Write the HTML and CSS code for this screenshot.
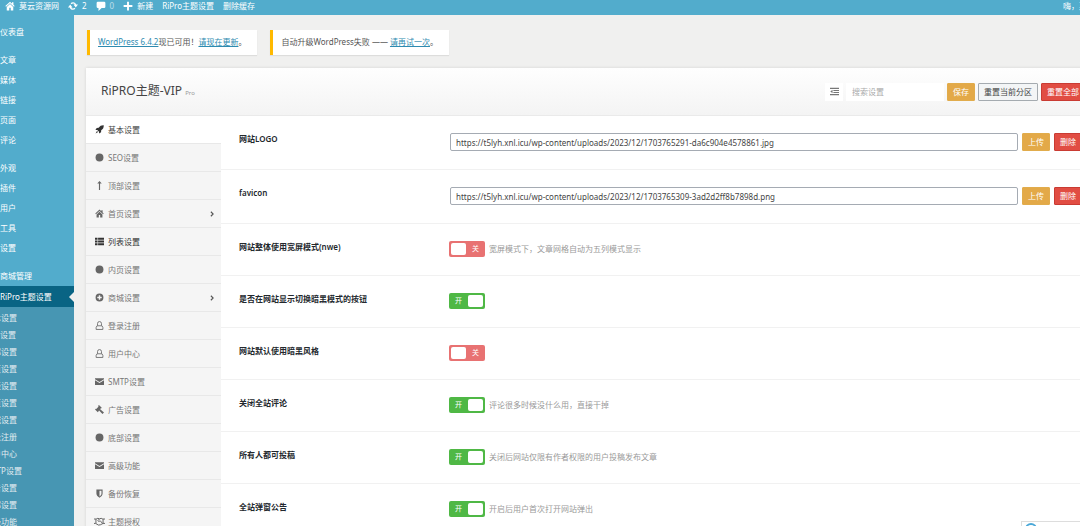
FILE: index.html
```html
<!DOCTYPE html>
<html lang="zh-CN">
<head>
<meta charset="utf-8">
<title>RiPRO主题设置</title>
<link rel="stylesheet" href="styles.css">
</head>
<body>
<svg class="sprite" aria-hidden="true">
  <symbol id="i-home" viewBox="0 0 16 16"><path d="M8 1 0.5 8l1.200 1.300L8 3.600l6.300 5.700L15.500 8 13.500 6.100V2h-2.300v2zM8 4.900 2.800 9.600V15h4v-4.200h2.400V15h4V9.600z"/></symbol>
  <symbol id="i-update" viewBox="0 0 20 20"><path d="M10.200 2.300c3 0 5.500 2 6.300 4.900H20l-4.500 5.600L11 7.200h2.700c-.7-1.300-2-2.100-3.500-2.100-1.200 0-2.300.5-3 1.300L5.200 4.300c1.300-1.300 3-2 5-2zM4.500 7.200 9 12.800H6.300c.7 1.300 2 2.100 3.500 2.100 1.200 0 2.300-.5 3-1.300l2 2.100c-1.300 1.300-3 2-5 2-3 0-5.500-2-6.300-4.900H0z"/></symbol>
  <symbol id="i-comment" viewBox="0 0 16 16"><path d="M3 1h10a2 2 0 0 1 2 2v6a2 2 0 0 1-2 2H9l-5 5v-5H3a2 2 0 0 1-2-2V3a2 2 0 0 1 2-2z"/></symbol>
  <symbol id="i-plus" viewBox="0 0 16 16"><path d="M6.500 1h3v5.500H15v3H9.500V15h-3V9.500H1v-3h5.500z"/></symbol>
  <symbol id="i-rocket" viewBox="0 0 16 16"><path d="M15.500.5c-4-.2-6.700 1-9 4.500L3 5.200.8 8.700l3.200.2 3.100 3.100.2 3.200 3.500-2.200.2-3.500c3.500-2.300 4.700-5 4.500-9zM3.500 10.500 1 15l4.500-2.500z"/></symbol>
  <symbol id="i-circle" viewBox="0 0 16 16"><circle cx="8" cy="8" r="7"/></symbol>
  <symbol id="i-up" viewBox="0 0 16 16"><path d="m8 0 4 4.500H9V16H7V4.500H4z"/></symbol>
  <symbol id="i-list" viewBox="0 0 16 16"><path d="M0 1.500h4.500V5H0zM5.500 1.500H16V5H5.500zM0 6.200h4.500v3.500H0zM5.500 6.200H16v3.500H5.500zM0 11h4.500v3.500H0zM5.500 11H16v3.500H5.500z"/></symbol>
  <symbol id="i-plus-circle" viewBox="0 0 16 16"><path fill-rule="evenodd" d="M8 1a7 7 0 1 1 0 14A7 7 0 0 1 8 1zM6.700 4v2.700H4v2.600h2.700V12h2.600V9.300H12V6.700H9.300V4z"/></symbol>
  <symbol id="i-lock" viewBox="0 0 16 16"><path fill="none" stroke="currentColor" stroke-width="1.500" d="M4.500 8V4.500a3.500 3.500 0 0 1 7 0V8M3.500 8.500h9l1.500 3v3.500H2v-3.500z"/></symbol>
  <symbol id="i-mail" viewBox="0 0 16 16"><path d="M0 2h16v2L8 9 0 4zM0 5.800l8 5 8-5V14H0z"/></symbol>
  <symbol id="i-gavel" viewBox="0 0 16 16"><path d="M7 0l5 5-1.300 1.300-.7-.3-1.200 1.200L16 13.200 13.200 16 7.300 9.700 6 11l.3.700L5 13 0 8l1.300-1.300.9.200L6.100 3l-.4-1.700z"/></symbol>
  <symbol id="i-shield" viewBox="0 0 16 16"><path fill-rule="evenodd" d="M2.500 1h11v7c0 3.500-2.500 5.500-5.500 7.500C5 13.500 2.500 11.500 2.500 8zM8 3v10.200c2-1.500 3.500-2.900 3.500-5.200V3z"/></symbol>
  <symbol id="i-hands" viewBox="0 0 20 16"><path fill="none" stroke="currentColor" stroke-width="1.800" d="M0 3.500h4l3-1.300 3 1 3-1 3 1.300h4M0 11.500h3l5 3 3.500-.5 3-1.500 2-1H20M3.500 3.500v8M16.500 3.500v8M10 3.200 7 6.500c1 2 3 1.500 4.200 0l4.300 5"/></symbol>
  <symbol id="i-indent" viewBox="0 0 16 16"><path d="M0 1.500h16v2H0zM6 5.200h10v2H6zM6 8.800h10v2H6zM0 12.500h16v2H0zM4.500 4.700v6.600L.5 8z"/></symbol>
  <symbol id="i-next" viewBox="0 0 16 16"><path fill="none" stroke="currentColor" stroke-width="3" d="m5 2 6 6-6 6"/></symbol>
</svg>

<header class="adminbar">
  <a href="#" class="bar-home"><svg class="icon"><use href="#i-home"/></svg>莫云资源网</a>
  <a href="#"><svg class="icon"><use href="#i-update"/></svg>2</a>
  <a href="#" class="bar-faint"><svg class="icon"><use href="#i-comment"/></svg><span>0</span></a>
  <a href="#"><svg class="icon"><use href="#i-plus"/></svg>新建</a>
  <a href="#">RiPro主题设置</a>
  <a href="#">删除缓存</a>
  <a href="#" class="bar-user">嗨，莫云</a>
</header>

<div class="layout">
  <nav class="adminmenu">
    <ul class="menu">
      <li><a href="#">仪表盘</a></li>
      <li class="apart"><a href="#">文章</a></li>
      <li><a href="#">媒体</a></li>
      <li><a href="#">链接</a></li>
      <li><a href="#">页面</a></li>
      <li><a href="#">评论</a></li>
      <li class="apart"><a href="#">外观</a></li>
      <li><a href="#">插件</a></li>
      <li><a href="#">用户</a></li>
      <li><a href="#">工具</a></li>
      <li><a href="#">设置</a></li>
      <li class="apart"><a href="#">商城管理</a></li>
      <li class="current"><a href="#">RiPro主题设置</a></li>
    </ul>
    <ul class="submenu">
      <li><a href="#">基本设置</a></li>
      <li><a href="#">SEO设置</a></li>
      <li><a href="#">顶部设置</a></li>
      <li><a href="#">首页设置</a></li>
      <li><a href="#">列表设置</a></li>
      <li><a href="#">内页设置</a></li>
      <li><a href="#">商城设置</a></li>
      <li><a href="#">登录注册</a></li>
      <li><a href="#">用户中心</a></li>
      <li><a href="#">SMTP设置</a></li>
      <li><a href="#">广告设置</a></li>
      <li><a href="#">底部设置</a></li>
      <li><a href="#">高级功能</a></li>
    </ul>
  </nav>

  <main class="content">
    <div class="notices">
      <p class="notice"><a href="#">WordPress 6.4.2</a>现已可用！<a href="#">请现在更新</a>。</p>
      <p class="notice">自动升级WordPress失败 —— <a href="#">请再试一次</a>。</p>
    </div>

    <form class="panel">
      <div class="panel-head">
        <h1>RiPRO主题-VIP <small>Pro</small></h1>
        <button type="button" class="expand" aria-label="展开全部"><svg class="icon"><use href="#i-indent"/></svg></button>
        <input type="text" class="search" placeholder="搜索设置" aria-label="搜索设置">
        <button type="button" class="btn btn-save">保存</button>
        <button type="button" class="btn btn-plain">重置当前分区</button>
        <button type="button" class="btn btn-danger">重置全部</button>
      </div>

      <div class="panel-body">
        <ul class="tabs">
          <li class="active"><a href="#"><svg class="icon"><use href="#i-rocket"/></svg>基本设置</a></li>
          <li><a href="#"><svg class="icon"><use href="#i-circle"/></svg>SEO设置</a></li>
          <li><a href="#"><svg class="icon"><use href="#i-up"/></svg>顶部设置</a></li>
          <li><a href="#"><svg class="icon"><use href="#i-home"/></svg>首页设置<svg class="arrow"><use href="#i-next"/></svg></a></li>
          <li class="hover"><a href="#"><svg class="icon"><use href="#i-list"/></svg>列表设置</a></li>
          <li><a href="#"><svg class="icon"><use href="#i-circle"/></svg>内页设置</a></li>
          <li><a href="#"><svg class="icon"><use href="#i-plus-circle"/></svg>商城设置<svg class="arrow"><use href="#i-next"/></svg></a></li>
          <li><a href="#"><svg class="icon"><use href="#i-lock"/></svg>登录注册</a></li>
          <li><a href="#"><svg class="icon"><use href="#i-lock"/></svg>用户中心</a></li>
          <li><a href="#"><svg class="icon"><use href="#i-mail"/></svg>SMTP设置</a></li>
          <li><a href="#"><svg class="icon"><use href="#i-gavel"/></svg>广告设置</a></li>
          <li><a href="#"><svg class="icon"><use href="#i-circle"/></svg>底部设置</a></li>
          <li><a href="#"><svg class="icon"><use href="#i-mail"/></svg>高级功能</a></li>
          <li><a href="#"><svg class="icon"><use href="#i-shield"/></svg>备份恢复</a></li>
          <li><a href="#"><svg class="icon icon-wide"><use href="#i-hands"/></svg>主题授权</a></li>
        </ul>

        <div class="fields">
          <div class="field">
            <label class="title" for="logo">网站LOGO</label>
            <div class="control">
              <input type="text" class="url" id="logo" value="https://t5lyh.xnl.icu/wp-content/uploads/2023/12/1703765291-da6c904e4578861.jpg">
              <button type="button" class="btn btn-save">上传</button>
              <button type="button" class="btn btn-danger">删除</button>
            </div>
          </div>
          <div class="field">
            <label class="title" for="favicon">favicon</label>
            <div class="control">
              <input type="text" class="url" id="favicon" value="https://t5lyh.xnl.icu/wp-content/uploads/2023/12/1703765309-3ad2d2ff8b7898d.png">
              <button type="button" class="btn btn-save">上传</button>
              <button type="button" class="btn btn-danger">删除</button>
            </div>
          </div>
          <div class="field">
            <label class="title" for="wide">网站整体使用宽屏模式(nwe)</label>
            <div class="control">
              <label class="switch"><input type="checkbox" id="wide"><span>关</span></label>
              <span class="hint">宽屏模式下，文章网格自动为五列模式显示</span>
            </div>
          </div>
          <div class="field">
            <label class="title" for="toggle">是否在网站显示切换暗黑模式的按钮</label>
            <div class="control">
              <label class="switch"><input type="checkbox" id="toggle" checked><span>开</span></label>
            </div>
          </div>
          <div class="field">
            <label class="title" for="dark">网站默认使用暗黑风格</label>
            <div class="control">
              <label class="switch"><input type="checkbox" id="dark"><span>关</span></label>
            </div>
          </div>
          <div class="field">
            <label class="title" for="comments">关闭全站评论</label>
            <div class="control">
              <label class="switch"><input type="checkbox" id="comments" checked><span>开</span></label>
              <span class="hint">评论很多时候没什么用，直接干掉</span>
            </div>
          </div>
          <div class="field">
            <label class="title" for="submit">所有人都可投稿</label>
            <div class="control">
              <label class="switch"><input type="checkbox" id="submit" checked><span>开</span></label>
              <span class="hint">关闭后网站仅限有作者权限的用户投稿发布文章</span>
            </div>
          </div>
          <div class="field">
            <label class="title" for="popup">全站弹窗公告</label>
            <div class="control">
              <label class="switch"><input type="checkbox" id="popup" checked><span>开</span></label>
              <span class="hint">开启后用户首次打开网站弹出</span>
            </div>
          </div>
        </div>
      </div>
    </form>
  </main>
</div>

<div class="floating"><span class="ring"></span></div>
</body>
</html>
```

FILE: styles.css
```css
* { box-sizing: border-box; }

html, body { height: 100%; }

body {
  margin: 0;
  display: flex;
  flex-direction: column;
  overflow: hidden;
  background: #f0f0ef;
  color: #555;
  font: 8px/12px "Noto Sans", "Noto Sans CJK SC", sans-serif;
}

ul, p, h1 { margin: 0; padding: 0; }
ul { list-style: none; }
input, button { font: inherit; margin: 0; }
.sprite { display: none; }
.icon { width: 9px; height: 9px; fill: currentColor; flex: none; }

/* Top bar */
.adminbar {
  display: flex;
  flex: none;
  align-items: center;
  gap: 9px;
  height: 15px;
  padding: 0 0 4px 5px;
  background: #52accc;
  white-space: nowrap;
}
.adminbar a {
  display: flex;
  align-items: center;
  gap: 4px;
  color: #fff;
  text-decoration: none;
}
.adminbar .icon { width: 10px; height: 10px; }
.bar-faint span { opacity: .6; }
.adminbar .bar-user { width: 17px; margin-left: auto; }

/* Left menu */
.layout { display: flex; flex: 1; min-height: 0; }
.adminmenu {
  display: flex;
  flex-direction: column;
  flex: none;
  width: 74px;
  overflow: hidden;
  background: #52accc;
  white-space: nowrap;
}
.adminmenu a { color: #fff; text-decoration: none; }
.menu { padding-top: 7px; line-height: 20px; }
.menu .apart { margin-top: 8px; }
.menu .current {
  display: flex;
  justify-content: space-between;
  align-items: center;
  height: 21px;
  background: #096484;
}
.current::after {
  content: "";
  border: 5px solid transparent;
  border-left-width: 0;
  border-right-color: #f0f0ef;
}
.submenu {
  flex: 1;
  padding-top: 2px;
  background: #4796b3;
  line-height: 17px;
}
.submenu li { margin-left: -15px; }
.submenu a { color: #e2ecf1; }

/* Notices */
.content { flex: 1; min-width: 0; padding: 15px 0 0 12px; }
.notices { display: flex; gap: 13px; padding-left: 1px; }
.notice {
  padding: 6px 11px 7px 8px;
  border-left: 3px solid #ffb900;
  background: #fff;
  box-shadow: 0 1px 1px rgba(0, 0, 0, .08);
  white-space: nowrap;
}
.notice a { color: #2e8bb0; }

/* Settings panel, wider than the viewport on the right */
.panel {
  margin: 13px -20px 0 0;
  background: #fff;
  box-shadow: 0 0 3px rgba(0, 0, 0, .12);
}
.panel-head {
  display: flex;
  align-items: center;
  gap: 3px;
  height: 48px;
  padding: 0 15px;
  border-bottom: 1px solid #eaeaea;
  background: linear-gradient(#fefefe, #f4f4f4);
}
h1 {
  margin-right: auto;
  color: #444;
  font-size: 12px;
  font-weight: 400;
  line-height: 16px;
}
h1 small { color: #999; font-size: 6px; }
.expand {
  display: flex;
  align-items: center;
  justify-content: center;
  width: 18px;
  height: 18px;
  padding: 0;
  border: 0;
  background: #fff;
  color: #777;
}
.search {
  width: 98px;
  height: 18px;
  padding: 0 6px;
  border: 0;
  background: #fff;
}
.search::placeholder { color: #aaa; }
.btn {
  flex: none;
  height: 18px;
  padding: 0 5px;
  border: 1px solid;
  border-radius: 1px;
  line-height: 14px;
  white-space: nowrap;
}
.btn-save { border-color: #e1ac4c; background: #e3a948; color: #fff; }
.btn-plain { border-color: #a5abb0; background: #f3f5f6; color: #444; }
.btn-danger { border-color: #c93b33; background: #e14d43; color: #fff; }

.panel-body { display: flex; }
.tabs {
  flex: none;
  width: 135px;
  background: #f5f5f5;
}
.tabs a {
  display: flex;
  align-items: center;
  gap: 4px;
  height: 28px;
  padding: 0 6px 0 9px;
  border-bottom: 1px solid #e8e8e8;
  color: #777;
  text-decoration: none;
}
.tabs .icon { color: #666; }
.tabs .icon-wide { width: 11px; margin: 0 -1px; }
.tabs .active a { background: #fff; color: #444; }
.tabs .hover a, .tabs .active .icon, .tabs .hover .icon { color: #333; }
.arrow { width: 6px; height: 6px; margin-left: auto; color: #555; }

/* Fields */
.fields { flex: 1; min-width: 0; }
.field {
  display: flex;
  align-items: flex-start;
  padding: 17px 18px 18px;
  border-bottom: 1px solid #f1f1f1;
}
.title {
  flex: none;
  width: 210px;
  color: #23282d;
  font-weight: 600;
}
.control { display: flex; flex: 1; align-items: center; gap: 4px; }
.url {
  flex: 1;
  min-width: 0;
  height: 18px;
  margin-left: 1px;
  padding: 0 5px;
  border: 1px solid #a5abb3;
  border-radius: 2px;
  background: #fff;
  color: #444;
}
.switch {
  display: flex;
  align-items: center;
  justify-content: space-between;
  width: 36px;
  height: 16px;
  padding: 0 6px 0 2px;
  border-radius: 2px;
  background: #e87272;
  color: #fff;
  font-size: 7px;
}
.switch:has(:checked) {
  flex-direction: row-reverse;
  padding: 0 2px 0 6px;
  background: #4fb845;
}
.switch input {
  appearance: none;
  width: 15px;
  height: 12px;
  border-radius: 2px;
  background: #fff;
}
.hint { color: #999; }

/* Helper window peeking in from the bottom edge */
.floating {
  position: fixed;
  right: 0;
  bottom: 0;
  width: 59px;
  height: 5px;
  overflow: hidden;
  border: 1px solid #ddd;
  border-width: 1px 0 0 1px;
  background: #fff;
}
.ring {
  display: block;
  width: 12px;
  height: 12px;
  margin: 1px 0 0 3px;
  border: 2px solid #4aa8d8;
  border-radius: 50%;
}
```
